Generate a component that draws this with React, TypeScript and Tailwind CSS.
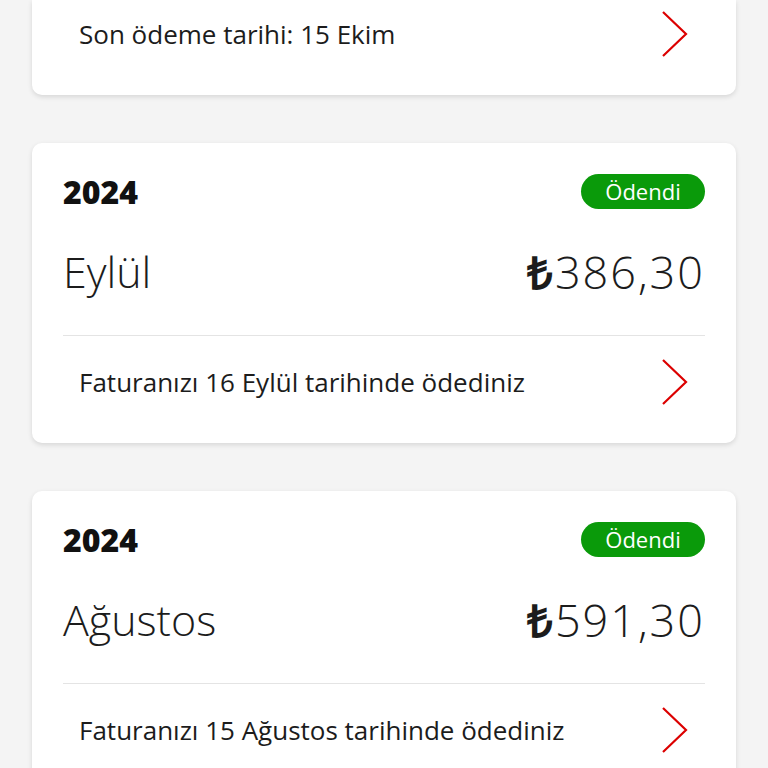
import React from "react";

type Bill = {
  year: string;
  month: string;
  amount: string;
  note: string;
};

const bills: Bill[] = [
  { year: "2024", month: "Eylül", amount: "386,30", note: "Faturanızı 16 Eylül tarihinde ödediniz" },
  { year: "2024", month: "Ağustos", amount: "591,30", note: "Faturanızı 15 Ağustos tarihinde ödediniz" },
];

function Chevron() {
  return (
    <svg width="28" height="48" viewBox="0 0 28 48" fill="none" className="shrink-0">
      <polyline points="2,2 25,24 2,46" stroke="#dc0000" strokeWidth="2.2" strokeLinejoin="miter" />
    </svg>
  );
}

function FooterRow({ text, first }: { text: string; first?: boolean }) {
  return (
    <div
      className={
        first
          ? "flex items-center justify-between pl-4 pr-[16px] pt-[16px] pb-[43px]"
          : "flex items-center justify-between pl-4 pr-[16px] pt-[28px] pb-[43px]"
      }
    >
      <span className="h-[36px] leading-[36px] text-[26px] text-[#1c1c1c]">{text}</span>
      <div className="h-[36px] flex items-center">
        <Chevron />
      </div>
    </div>
  );
}

function BillCard({ bill }: { bill: Bill }) {
  return (
    <div className="bg-white rounded-[10px] shadow-[0_2px_5px_rgba(0,0,0,0.12)] px-[31px] pt-[31px]">
      <div className="flex items-center justify-between h-[35px]">
        <span className="text-[32px] font-extrabold text-[#111] leading-none">{bill.year}</span>
        <span className="h-[35px] w-[124px] rounded-full bg-[#0a9a0a] text-white text-[22px] leading-[35px] text-center">
          Ödendi
        </span>
      </div>
      <div className="flex items-center justify-between h-[50px] mt-[38px] mb-[38px]">
        <span className="text-[43px] font-light text-[#1c1c1c]">{bill.month}</span>
        <span className="text-[45px] font-light text-[#1c1c1c] tracking-[2px] flex items-center">
          <span className="font-bold">₺</span>
          {bill.amount}
        </span>
      </div>
      <div className="h-px bg-[#e4e4e4]" />
      <FooterRow text={bill.note} />
    </div>
  );
}

export default function App() {
  return (
    <div className="min-h-[768px] bg-[#f4f4f4] px-8 pb-12 font-['Open_Sans',sans-serif] overflow-hidden">
      <div className="flex flex-col gap-12">
        <div className="bg-white rounded-b-[10px] shadow-[0_2px_5px_rgba(0,0,0,0.12)] px-[31px]">
          <FooterRow text="Son ödeme tarihi: 15 Ekim" first />
        </div>
        {bills.map((b) => (
          <BillCard key={b.month} bill={b} />
        ))}
      </div>
    </div>
  );
}
